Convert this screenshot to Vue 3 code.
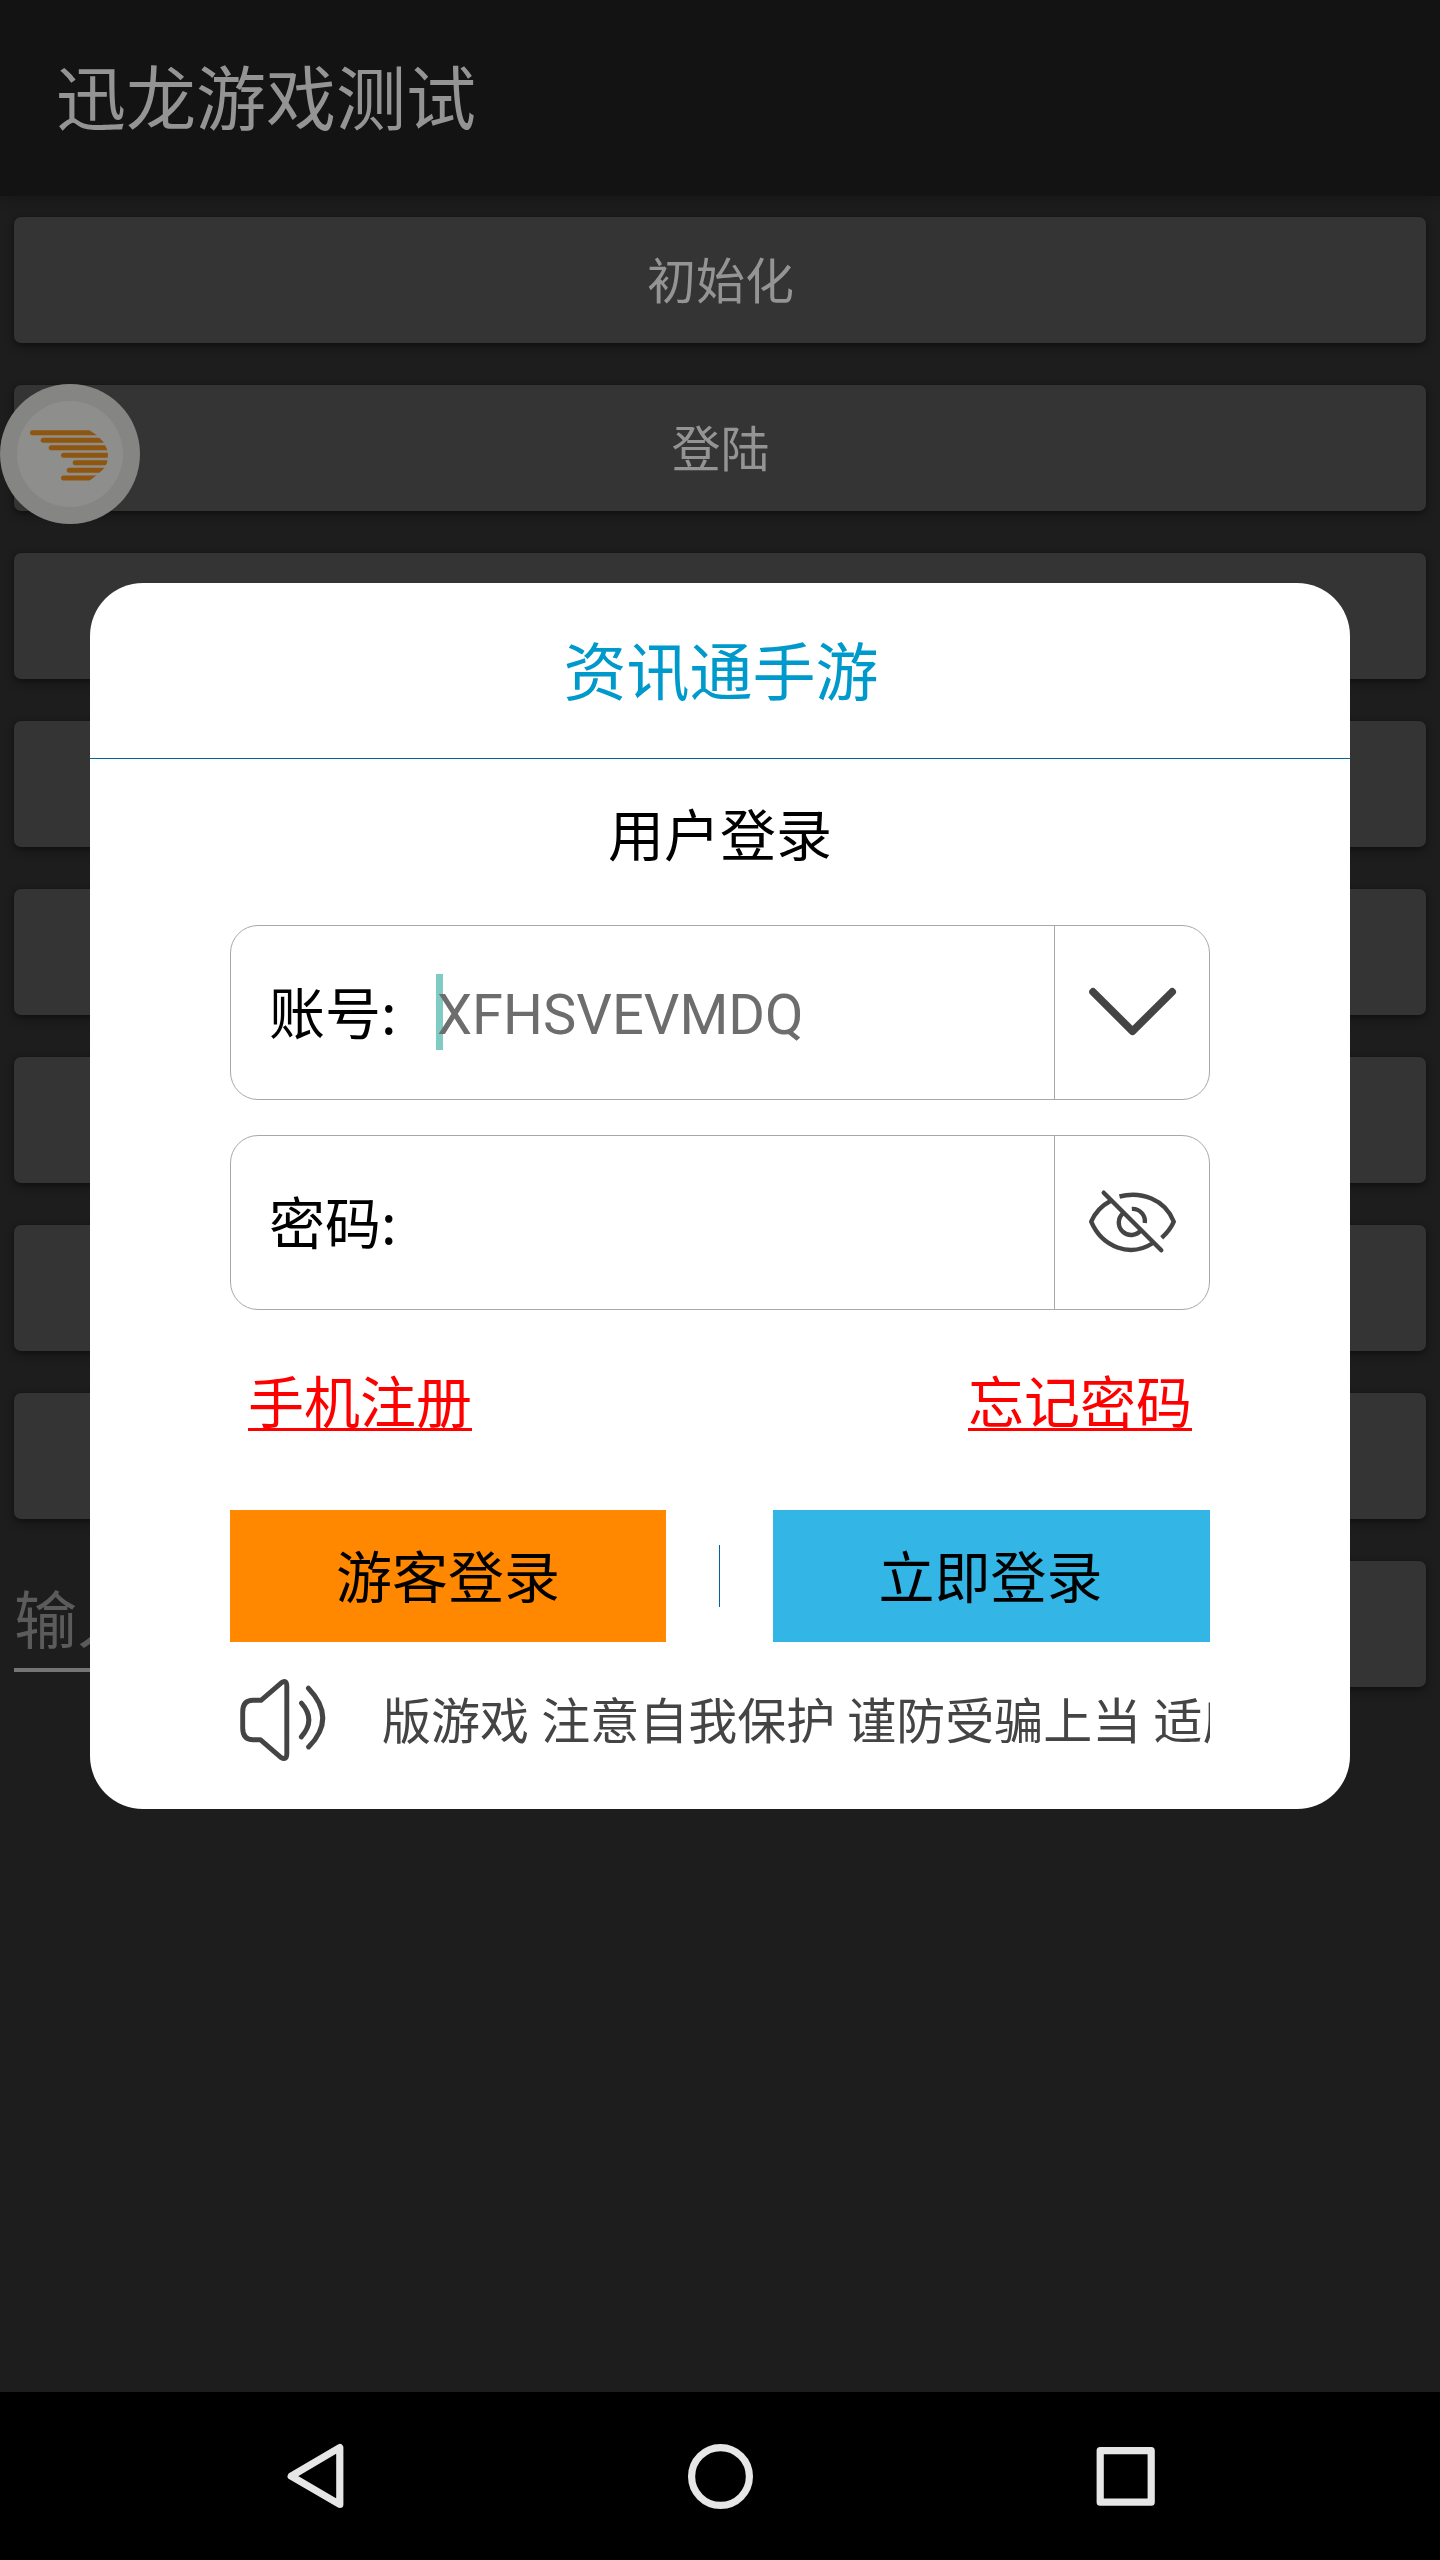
<script setup>
const menu = ['初始化', '登陆', '', '', '', '', '', '']

// Logo stripes: left edge of each bar, top to bottom
const stripes = [30, 40.7, 48.7, 61, 72.7, 66.7, 61].map((x, i) => ({ x, y: 46.2 + i * 7.53 }))
</script>

<template>
  <div class="screen">
    <header class="app-bar">迅龙游戏测试</header>

    <main class="content">
      <button v-for="(label, i) in menu" :key="i" class="menu-btn">{{ label }}</button>
      <div class="input-row">
        <div class="edit">输入</div>
        <button class="menu-btn row-btn"></button>
      </div>
    </main>

    <nav class="nav-bar">
      <svg width="80" height="80" viewBox="0 0 80 80">
        <path d="M64.8 11.5V68.5L16.2 40.2Z" class="nav-icon" />
      </svg>
      <svg width="80" height="80" viewBox="0 0 80 80">
        <circle cx="40.5" cy="40.5" r="28.9" class="nav-icon" />
      </svg>
      <svg width="80" height="80" viewBox="0 0 80 80">
        <rect x="15.2" y="14.7" width="51" height="51.5" class="nav-icon" />
      </svg>
    </nav>

    <svg class="float-ball" width="140" height="140" viewBox="0 0 140 140">
      <defs>
        <clipPath id="wing">
          <path d="M0 40H80L89 46L96.5 51L103 57.5L107 65L108 71L107 79L103 85.5L96.5 91.3L89 97H0Z" />
        </clipPath>
      </defs>
      <circle cx="70" cy="70" r="70" fill="#858583" />
      <circle cx="70" cy="70" r="53" fill="#8e8e8c" />
      <g clip-path="url(#wing)">
        <rect v-for="(s, i) in stripes" :key="i" :x="s.x" :y="s.y" width="80" height="5" rx="2.5" fill="#8f560f" />
      </g>
    </svg>

    <section class="dialog">
      <h1 class="dialog-title">资讯通手游</h1>
      <div class="dialog-body">
        <h2 class="subtitle">用户登录</h2>

        <div class="field">
          <label>账号<span class="colon">:</span></label>
          <div class="value"><i class="caret"></i>XFHSVEVMDQ</div>
          <div class="action">
            <svg width="100" height="101" viewBox="0 0 100 101">
              <path d="M11 29.9L50.5 69.2L90.2 29.9" class="stroke" stroke-width="7.6" />
            </svg>
          </div>
        </div>

        <div class="field">
          <label>密码<span class="colon">:</span></label>
          <div class="value"></div>
          <div class="action">
            <svg width="100" height="101" viewBox="0 0 100 101">
              <g class="stroke" stroke-width="4.4">
                <path d="M21.7 20.7L79.3 78.3" />
                <path d="M37.5 24.5C59 19 83 27 91.8 49.7Q88 58.5 79.7 65.8" stroke-linecap="butt" />
                <path d="M28.5 29Q15 36 9.2 49.7C20 75 48 86 71 71" stroke-linecap="butt" />
                <path d="M49.8 36.9A12.4 12.4 0 0 1 62.8 51" stroke-linecap="butt" />
                <path d="M41 41.3A12.4 12.4 0 1 0 59 58.2" stroke-linecap="butt" />
              </g>
            </svg>
          </div>
        </div>

        <div class="links">
          <a>手机注册</a>
          <a>忘记密码</a>
        </div>

        <div class="buttons">
          <button class="guest">游客登录</button>
          <span class="separator"></span>
          <button class="login">立即登录</button>
        </div>

        <div class="notice">
          <svg width="104" height="101" viewBox="0 0 104 101">
            <g class="stroke" stroke-width="4.9">
              <path d="M31 31.3H23Q12.7 31.3 12.7 43V59Q12.7 70.7 23 70.7H30.3L50.8 88.3Q56.8 92 56.8 84.5V17.5Q56.8 10 51.3 13.8Z" />
              <path d="M71.4 34.2Q86.4 51 71.2 68" />
              <path d="M78.4 19.2Q107 49 78.6 78" />
            </g>
          </svg>
          <div class="marquee">版游戏 注意自我保护 谨防受骗上当 适度游戏益脑</div>
        </div>
      </div>
    </section>
  </div>
</template>

<style>
body {
  margin: 0;
  background: #1d1d1d;
}
</style>

<style scoped>
.screen {
  position: relative;
  width: 1440px;
  height: 2560px;
  display: flex;
  flex-direction: column;
  overflow: hidden;
  background: #1d1d1d;
  font-family: Roboto, "Noto Sans CJK SC", sans-serif;
  font-weight: 400;
}

.screen * {
  box-sizing: border-box;
}

button {
  border: 0;
  margin: 0;
  font: inherit;
}

.app-bar {
  flex: none;
  height: 196px;
  padding: 5px 56px 0;
  line-height: 193px;
  font-size: 70px;
  color: #949494;
  background: #131313;
  box-shadow: 0 2px 14px rgba(0, 0, 0, 0.25);
}

.content {
  flex: 1;
  display: flex;
  flex-direction: column;
  gap: 42px;
  padding: 21px 14px 0;
}

.menu-btn {
  flex: none;
  height: 126px;
  padding: 6px 0 0 1px;
  line-height: 120px;
  font-size: 49px;
  color: #949494;
  background: #343434;
  border-radius: 7px;
  box-shadow: 0 4px 8px rgba(0, 0, 0, 0.35), 0 0 4px rgba(0, 0, 0, 0.2);
}

.input-row {
  display: flex;
  gap: 28px;
}

.edit {
  flex: 1;
  height: 111px;
  padding-top: 6px;
  line-height: 110px;
  font-size: 63px;
  color: #5b5b5b;
  border-bottom: 4px solid #757575;
}

.row-btn {
  width: 360px;
}

.nav-bar {
  flex: none;
  height: 168px;
  display: flex;
  justify-content: center;
  align-items: center;
  gap: 325px;
  background: #000;
}

.nav-icon {
  fill: none;
  stroke: #e6e6e6;
  stroke-width: 7.2;
  stroke-linejoin: round;
}

.float-ball {
  position: absolute;
  left: 0;
  top: 384px;
}

.dialog {
  position: absolute;
  left: 90px;
  top: 583px;
  width: 1260px;
  height: 1226px;
  background: #fff;
  border-radius: 53px;
}

h1,
h2 {
  margin: 0;
  font-weight: 400;
  text-align: center;
}

.dialog-title {
  height: 176px;
  padding: 7px 0 0 2px;
  line-height: 168px;
  font-size: 63px;
  color: #0099cc;
  border-bottom: 1px solid #00639f;
}

.dialog-body {
  padding: 0 140px;
  font-size: 56px;
  color: #000;
}

.subtitle {
  height: 166px;
  line-height: 156px;
  font-size: 56px;
}

.field {
  display: flex;
  height: 175px;
  margin-bottom: 35px;
  border: 1px solid #a8a8a8;
  border-radius: 28px;
  line-height: 179px;
}

.field + .links {
  margin-top: -35px;
}

label {
  width: 206px;
  padding-left: 38px;
}

.colon {
  font-family: "Noto Sans CJK SC", sans-serif;
  line-height: 0;
}

.value {
  position: relative;
  z-index: 0;
  flex: 1;
  color: #6d6d6d;
}

.caret {
  position: absolute;
  z-index: -1;
  left: -1px;
  top: 48px;
  width: 7px;
  height: 76px;
  background: #80cbc4;
}

.action {
  width: 155px;
  display: flex;
  align-items: center;
  justify-content: center;
  border-left: 1px solid #a8a8a8;
}

.stroke {
  fill: none;
  stroke: #444;
  stroke-linecap: round;
  stroke-linejoin: round;
}

.links {
  display: flex;
  justify-content: space-between;
  height: 200px;
  padding: 0 18px;
  line-height: 188px;
  color: #f00;
}

.links a {
  text-decoration: underline;
  text-decoration-thickness: 3px;
  text-underline-offset: 5px;
  text-decoration-skip-ink: none;
}

.buttons {
  display: flex;
  align-items: center;
  justify-content: space-between;
  height: 132px;
}

.buttons button {
  width: 436px;
  height: 132px;
  padding: 6px 0 0;
  line-height: 126px;
  color: #000;
}

.buttons .guest {
  background: #ff8800;
}

.buttons .login {
  width: 437px;
  padding-right: 2px;
  background: #33b5e5;
}

.separator {
  width: 1px;
  height: 62px;
  background: #00639f;
}

.notice {
  display: flex;
  padding-top: 27px;
}

.marquee {
  flex: 1;
  margin-left: 48px;
  height: 101px;
  line-height: 108px;
  font-size: 49px;
  color: #444;
  white-space: nowrap;
  overflow: hidden;
}
</style>
